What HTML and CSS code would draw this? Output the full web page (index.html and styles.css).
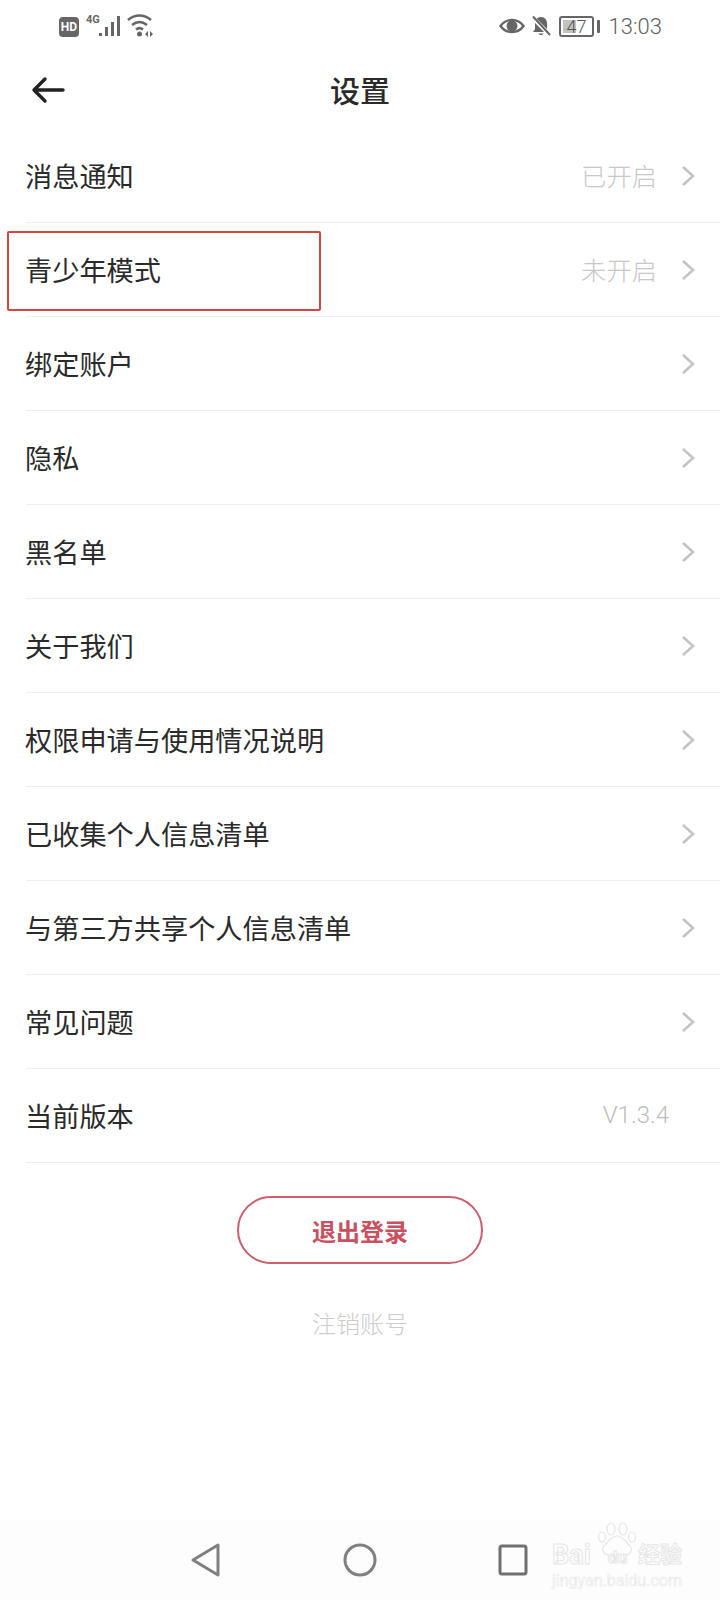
FILE: index.html
```html
<!DOCTYPE html>
<html lang="zh-CN">
<head>
  <meta charset="UTF-8" />
  <meta name="viewport" content="width=device-width, initial-scale=1.0" />
  <title>设置</title>
  <link rel="stylesheet" href="styles.css">
</head>
<body>

<div class="status-bar">
  <div class="status-left">
    <span class="hd-badge">HD</span>
    <span class="net-type">4G</span>
    <svg class="signal" width="24" height="22" viewBox="0 0 24 22">
      <path d="M2.500 18v3M8.500 12v9M14.500 7v14M20.500 1v20" stroke="#666" stroke-width="3" fill="none"/>
    </svg>
    <svg class="wifi" width="28" height="24" viewBox="0 0 28 24">
      <path d="M1 6C8 0 17 0 24 6M5 11c5-4 10-4 15 0M9 15.500c2.500-2 4.500-2 7 0" stroke="#666" stroke-width="2.600" fill="none"/>
      <circle cx="12.500" cy="20" r="2.500" fill="#666"/>
      <path d="M18 20l3-3v6zM26 20l-3-3v6z" fill="#666"/>
    </svg>
  </div>
  <div class="status-right">
    <svg class="eye" width="26" height="18" viewBox="0 0 26 18">
      <path d="M1.500 9C7 1 19 1 24.500 9 19 17 7 17 1.500 9z" stroke="#666" stroke-width="2.400" fill="none"/>
      <circle cx="13" cy="9" r="5.500" fill="#666"/>
    </svg>
    <svg class="bell" width="22" height="22" viewBox="0 0 22 22">
      <path d="M11 2c4 0 6 3 6 7v5l2 3H3l2-3V9c0-4 2-7 6-7z" fill="#666"/>
      <path d="M8.500 18.500c1 2 4 2 5 0z" fill="#666"/>
      <path d="M2 2l18 18" stroke="#fff" stroke-width="4"/>
      <path d="M3 1.500l17 18.500" stroke="#666" stroke-width="2"/>
    </svg>
    <div class="battery">
      <div class="battery-box"><span class="battery-fill"></span><span class="battery-num">47</span></div>
      <span class="battery-cap"></span>
    </div>
    <span class="clock">13:03</span>
  </div>
</div>

<div class="title-bar">
  <svg class="back" width="34" height="28" viewBox="0 0 34 28">
    <path d="M32 14H3M14 3L3 14l11 11" stroke="#222" stroke-width="3.400" fill="none" stroke-linecap="round" stroke-linejoin="round"/>
  </svg>
  <h1>设置</h1>
</div>

<ul class="settings">
  <li class="row"><span class="row-name">消息通知</span><span class="row-value">已开启</span><svg class="chev" width="14" height="22" viewBox="0 0 14 22"><path d="M2 2l10 9-10 9"/></svg></li>
  <li class="row"><span class="row-name">青少年模式</span><span class="row-value">未开启</span><svg class="chev" width="14" height="22" viewBox="0 0 14 22"><path d="M2 2l10 9-10 9"/></svg><span class="highlight"></span></li>
  <li class="row"><span class="row-name">绑定账户</span><svg class="chev" width="14" height="22" viewBox="0 0 14 22"><path d="M2 2l10 9-10 9"/></svg></li>
  <li class="row"><span class="row-name">隐私</span><svg class="chev" width="14" height="22" viewBox="0 0 14 22"><path d="M2 2l10 9-10 9"/></svg></li>
  <li class="row"><span class="row-name">黑名单</span><svg class="chev" width="14" height="22" viewBox="0 0 14 22"><path d="M2 2l10 9-10 9"/></svg></li>
  <li class="row"><span class="row-name">关于我们</span><svg class="chev" width="14" height="22" viewBox="0 0 14 22"><path d="M2 2l10 9-10 9"/></svg></li>
  <li class="row"><span class="row-name">权限申请与使用情况说明</span><svg class="chev" width="14" height="22" viewBox="0 0 14 22"><path d="M2 2l10 9-10 9"/></svg></li>
  <li class="row"><span class="row-name">已收集个人信息清单</span><svg class="chev" width="14" height="22" viewBox="0 0 14 22"><path d="M2 2l10 9-10 9"/></svg></li>
  <li class="row"><span class="row-name">与第三方共享个人信息清单</span><svg class="chev" width="14" height="22" viewBox="0 0 14 22"><path d="M2 2l10 9-10 9"/></svg></li>
  <li class="row"><span class="row-name">常见问题</span><svg class="chev" width="14" height="22" viewBox="0 0 14 22"><path d="M2 2l10 9-10 9"/></svg></li>
  <li class="row"><span class="row-name">当前版本</span><span class="row-value version">V1.3.4</span></li>
</ul>

<div class="actions">
  <button class="logout">退出登录</button>
  <div class="cancel-account">注销账号</div>
</div>

<div class="nav-bar">
  <svg width="32" height="36" viewBox="0 0 32 36">
    <path d="M28 3v30L3 18z" stroke="#808080" stroke-width="3" fill="none" stroke-linejoin="round"/>
  </svg>
  <svg width="34" height="34" viewBox="0 0 34 34">
    <circle cx="17" cy="17" r="15" stroke="#808080" stroke-width="3" fill="none"/>
  </svg>
  <svg width="30" height="32" viewBox="0 0 30 32">
    <rect x="2" y="2" width="26" height="28" rx="2" stroke="#707070" stroke-width="3" fill="none"/>
  </svg>
  <div class="watermark">
    <svg class="paw" width="40" height="36" viewBox="0 0 40 36">
      <g fill="none" stroke="#e6e6e6" stroke-width="1.200">
        <ellipse cx="5" cy="15" rx="3.500" ry="5"/>
        <ellipse cx="14" cy="7" rx="4" ry="6"/>
        <ellipse cx="26" cy="7" rx="4" ry="6"/>
        <ellipse cx="35" cy="15" rx="3.500" ry="5"/>
        <path d="M20 14c6 0 9 6 13 10 3 4 0 10-6 9-4-1-10-1-14 0-6 1-9-5-6-9 4-4 7-10 13-10z"/>
      </g>
    </svg>
    <div class="wm-top"><span>Bai</span><span class="wm-du">du</span><span class="wm-cn">经验</span></div>
    <div class="wm-url">jingyan.baidu.com</div>
  </div>
</div>

</body>
</html>
```

FILE: styles.css
```css
body {
  margin: 0;
  width: 720px;
  height: 1600px;
  position: relative;
  overflow: hidden;
  background-color: #ffffff;
  font-family: "Noto Sans CJK SC", "Noto Sans", sans-serif;
  color: #2a2a2a;
}

/* status bar */
.status-bar {
  height: 52px;
  display: flex;
  align-items: center;
  justify-content: space-between;
  padding: 0 58px 0 59px;
  color: #666;
}
.status-left, .status-right {
  display: flex;
  align-items: center;
}
.hd-badge {
  width: 20px;
  height: 20px;
  background: #666;
  color: #fff;
  border-radius: 4px;
  font: bold 12px "Roboto", sans-serif;
  display: flex;
  align-items: center;
  justify-content: center;
  margin-top: 1px;
}
.net-type {
  font: bold 11px "Roboto", sans-serif;
  margin: -14px 0 0 7px;
}
.signal {
  margin-left: -2px;
}
.wifi {
  margin-left: 5px;
}
.eye {
  margin-right: 5px;
}
.battery {
  display: flex;
  align-items: center;
  gap: 3px;
  margin-left: 7px;
}
.battery-box {
  width: 31px;
  height: 17px;
  border: 2px solid #666;
  border-radius: 3px;
  position: relative;
}
.battery-fill {
  display: block;
  width: 13px;
  height: 13px;
  margin: 2px 0 0 2px;
  background: #c2c2c2;
}
.battery-num {
  position: absolute;
  left: 6px;
  top: -1px;
  font: 300 18px/19px "Roboto", sans-serif;
  color: #555;
}
.battery-cap {
  width: 3px;
  height: 13px;
  background: #666;
  border-radius: 1px;
}
.clock {
  font: 300 22px "Roboto", sans-serif;
  color: #606060;
  margin-left: 9px;
}

/* title */
.title-bar {
  height: 77px;
  padding-bottom: 3px;
  box-sizing: border-box;
  display: flex;
  align-items: center;
  justify-content: center;
  position: relative;
}
.title-bar h1 {
  margin: 0;
  font-size: 30px;
  font-weight: 500;
  color: #2a2a2a;
}
.back {
  position: absolute;
  left: 31px;
  top: 24px;
}

/* rows */
.settings {
  list-style: none;
  margin: 0;
  padding: 0 0 0 26px;
}
.row {
  height: 93px;
  border-bottom: 1px solid #eeeeee;
  display: flex;
  align-items: center;
  padding-right: 25px;
  position: relative;
}
.row-name {
  font-size: 27.200px;
  flex: 1;
  margin: 0 0 2px -1px;
}
.row-value {
  font-size: 25.300px;
  font-weight: 300;
  color: #c8c8c8;
  margin: 0 24px 2px 0;
}
.version {
  font: 300 24px "Roboto", sans-serif;
  color: #bdbdbd;
  margin-right: 26px;
}
.chev {
  fill: none;
  stroke: #c4c4c4;
  stroke-width: 2.600;
}
.highlight {
  position: absolute;
  left: -19px;
  top: 8px;
  width: 310px;
  height: 76px;
  border: 2px solid #d8453c;
  border-radius: 2px;
}

/* buttons */
.actions {
  display: flex;
  flex-direction: column;
  align-items: center;
  padding-top: 33px;
}
.logout {
  width: 246px;
  height: 68px;
  background: #fff;
  border: 2px solid #c9606c;
  border-radius: 34px;
  color: #c9505f;
  font-family: inherit;
  font-size: 24px;
  font-weight: 700;
  padding: 0;
}
.cancel-account {
  margin-top: 41px;
  font-size: 24px;
  font-weight: 300;
  color: #cccccc;
}

/* navigation */
.nav-bar {
  position: absolute;
  left: 0;
  right: 0;
  bottom: 0;
  height: 80px;
  background: #fdfdfd;
  display: flex;
  align-items: center;
  padding-left: 190px;
  gap: 121px;
}

/* faint Baidu mark sitting over the bar */
.watermark {
  position: absolute;
  left: 552px;
  top: 18px;
  width: 130px;
  color: #fdfdfd;
  -webkit-text-stroke: 1px #e6e6e6;
}
.paw {
  position: absolute;
  left: 45px;
  top: -16px;
}
.wm-top {
  display: flex;
  align-items: center;
  justify-content: space-between;
  font: bold 27px/28px "Roboto", sans-serif;
  position: relative;
}
.wm-du {
  font-size: 17px;
  margin: 4px 0 0 6px;
}
.wm-cn {
  font: bold 22px/28px "Noto Sans CJK SC", sans-serif;
  margin-bottom: 5px;
}
.wm-url {
  font: 16px/18px "Roboto", sans-serif;
  -webkit-text-stroke: 0.500px #e6e6e6;
  margin-top: 1px;
}
```
